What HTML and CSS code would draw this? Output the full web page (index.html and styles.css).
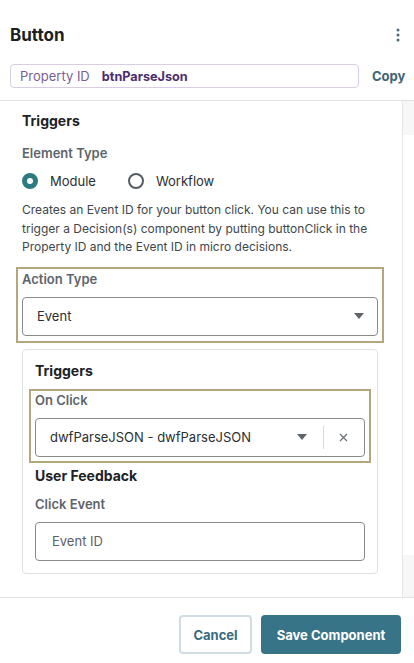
FILE: index.html
```html
<!DOCTYPE html>
<html>
<head>
<meta charset="utf-8">
<link rel="stylesheet" href="styles.css">
</head>
<body>
<div class="panel">
  <header class="head">
    <div class="title-row">
      <h1 class="title">Button</h1>
      <svg class="kebab" width="4" height="14" viewBox="0 0 4 14"><circle cx="2" cy="2" r="1.5"/><circle cx="2" cy="7" r="1.5"/><circle cx="2" cy="12" r="1.5"/></svg>
    </div>
    <div class="prop-row">
      <div class="prop-box"><span class="prop-label">Property ID</span><span class="prop-value">btnParseJson</span></div>
      <span class="copy">Copy</span>
    </div>
  </header>
  <div class="scroll">
    <div class="content">
      <h2 class="section">Triggers</h2>
      <div class="label mt15">Element Type</div>
      <div class="radios">
        <span class="radio checked"></span><span class="radio-text">Module</span>
        <span class="radio"></span><span class="radio-text">Workflow</span>
      </div>
      <p class="desc">Creates an Event ID for your button click. You can use this to trigger a Decision(s) component by putting buttonClick in the Property ID and the Event ID in micro decisions.</p>
      <div class="hl hl-action">
        <div class="label">Action Type</div>
        <div class="select">
          <span class="sel-text">Event</span>
          <span class="caret"></span>
        </div>
      </div>
      <div class="card">
        <h2 class="section">Triggers</h2>
        <div class="hl hl-click">
          <div class="label">On Click</div>
          <div class="select">
            <span class="sel-text">dwfParseJSON - dwfParseJSON</span>
            <span class="caret"></span>
            <span class="sep"></span>
            <svg class="clear" width="9" height="9" viewBox="0 0 9 9"><path d="M1 1L8 8M8 1L1 8"/></svg>
          </div>
        </div>
        <h2 class="section mt4">User Feedback</h2>
        <div class="label mt11">Click Event</div>
        <div class="input"><span class="placeholder">Event ID</span></div>
      </div>
    </div>
    <div class="scrollbar"><div class="sb-top"></div><div class="sb-mid"></div><div class="sb-bot"></div></div>
  </div>
  <footer class="foot">
    <button class="btn btn-cancel">Cancel</button>
    <button class="btn btn-save">Save Component</button>
  </footer>
</div>
</body>
</html>
```

FILE: styles.css
```css
* { box-sizing: border-box; }
html, body { margin: 0; padding: 0; background: #fff; }
body {
  font-family: Inter, "Noto Sans", "Liberation Sans", sans-serif;
  color: #1d2227;
  width: 414px;
  height: 663px;
  overflow: hidden;
}
.panel { display: flex; flex-direction: column; height: 663px; }
.head { padding: 24px 0 0 10px; border-bottom: 1px solid #dde2e5; padding-bottom: 12px; }
.title-row { display: flex; align-items: center; justify-content: space-between; padding-right: 14px; height: 22px; }
.title { margin: 0; font-size: 17px; line-height: 22px; font-weight: 700; color: #1b1f23; }
.kebab { fill: #4d6b78; }
.prop-row { display: flex; align-items: center; margin-top: 18px; }
.prop-box {
  width: 349px; height: 24px;
  border: 1px solid #d9cde4; border-radius: 4px;
  display: flex; align-items: center; padding-left: 9px;
  font-size: 13px;
}
.prop-label { color: #7a5f96; }
.prop-value { color: #4b2d6e; font-weight: 700; margin-left: 12px; font-size: 12.7px; }
.copy { margin-left: 13px; font-size: 13px; font-weight: 700; color: #3d6675; }
.scroll { display: flex; height: 497px; border-bottom: 1px solid #dde2e5; }
.content { width: 402px; padding: 11px 24px 0 22px; }
.scrollbar { flex: 1; border-left: 1px solid #e4e6e8; display: flex; flex-direction: column; }
.sb-top { height: 34px; background: #f7f7f8; }
.sb-mid { flex: 1; }
.sb-bot { height: 42px; background: #f7f7f8; }
.section { margin: 0; font-size: 14px; line-height: 18px; font-weight: 700; color: #1d2227; }
.label { font-size: 13px; line-height: 16px; font-weight: 600; color: #5d646c; }
.mt15 { margin-top: 15px; }
.mt4 { margin-top: 4px; }
.mt11 { margin-top: 11px; }
.radios { display: flex; align-items: center; margin-top: 12px; height: 16px; font-size: 13px; color: #2a2f34; }
.radio { width: 16px; height: 16px; border-radius: 50%; border: 2px solid #575c61; flex: none; }
.radio.checked { border: 5px solid #2b7b82; background: #fff; }
.radio-text { margin-left: 12px; margin-right: 32px; }
.desc { margin: 12px 0 0; font-size: 12px; line-height: 18.6px; color: #40464c; width: 358px; }
.hl { border: 2px solid #b5a77c; }
.hl-action { margin: 10px -6px 0; padding: 2px 4px 5px; }
.select {
  margin-top: 10px; height: 39px;
  border: 1px solid #878c91; border-radius: 4px;
  display: flex; align-items: center; padding-left: 14px; padding-right: 13px;
  font-size: 13px; color: #2a2f34;
}
.sel-text { flex: 1; }
.caret { width: 0; height: 0; border-left: 5px solid transparent; border-right: 5px solid transparent; border-top: 6px solid #5f6468; }
.card { margin-top: 6px; border: 1px solid #dfe2e5; border-radius: 4px; padding: 12px 12px 12px 12px; }
.hl-click { margin: 9px -6px 0; padding: 1px 4px 4px; }
.hl-click .select { padding-right: 16px; }
.sep { width: 1px; height: 23px; background: #d6d9dc; margin: 0 15px 0 16px; }
.clear { stroke: #6e7377; stroke-width: 1.3; fill: none; }
.input {
  margin-top: 10px; height: 39px;
  border: 1px solid #878c91; border-radius: 4px;
  display: flex; align-items: center; padding-left: 16px;
  font-size: 13px;
}
.placeholder { color: #5b6167; }
.foot { display: flex; justify-content: flex-end; padding: 17px 13px 0 0; gap: 9px; }
.btn {
  font-family: inherit; font-size: 13px; font-weight: 700;
  height: 39px; border-radius: 4px; cursor: pointer;
}
.btn-cancel { width: 73px; background: #fff; border: 2px solid #cfdde3; color: #3b6b7e; }
.btn-save { width: 140px; background: #377487; border: none; color: #fff; }
```
